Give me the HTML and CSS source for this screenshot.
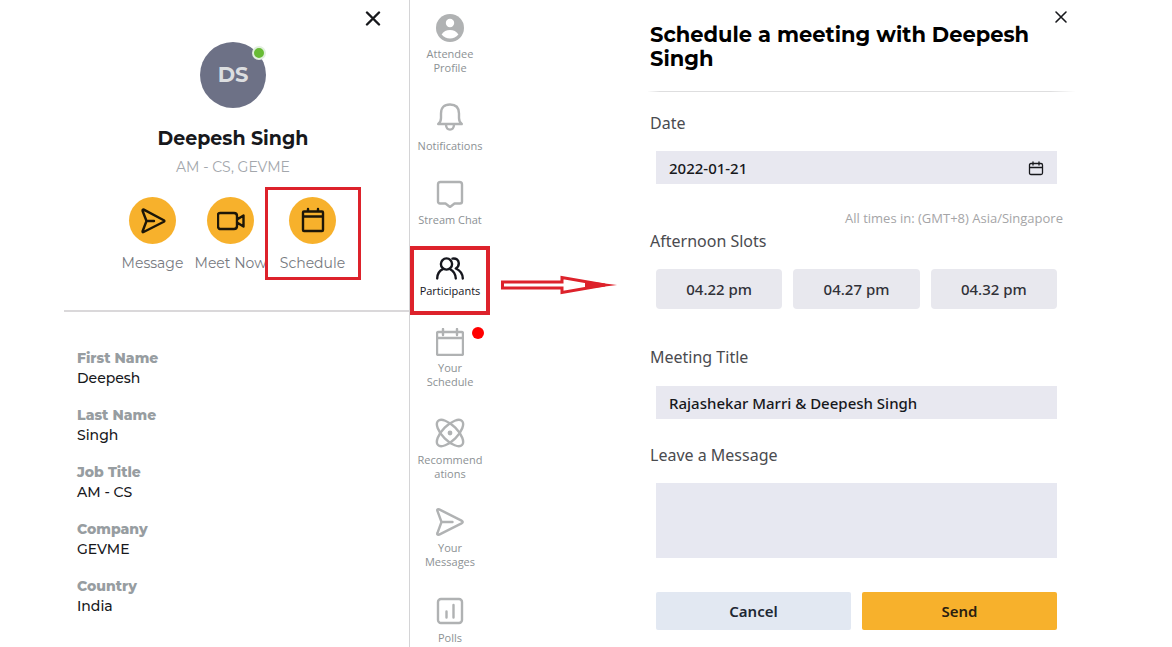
FILE: index.html
```html
<!DOCTYPE html>
<html lang="en">
<head>
<meta charset="utf-8">
<meta name="viewport" content="width=device-width, initial-scale=1">
<title>Schedule a meeting</title>
<link rel="stylesheet" href="styles.css">
</head>
<body>
<div class="app">
  <section class="profile" aria-label="Participant profile">
    <button class="close profile-close" type="button" aria-label="Close profile">
      <svg width="16" height="16" viewBox="0 0 16 16"><path d="M2 2.500l12 12M14 2.500L2 14.500" stroke-width="2.400"/></svg>
    </button>
    <div class="summary">
      <div class="avatar">DS<span class="presence"></span></div>
      <h2 class="name">Deepesh Singh</h2>
      <p class="role">AM - CS, GEVME</p>
      <div class="actions">
        <button class="action" type="button">
          <span class="disc"><svg width="28" height="28" viewBox="0 0 28 28"><path d="M4 2.6Q3.2 3 3.6 4L7.5 14 3.6 24.2Q3.2 25.600 4.600 25L24.800 14.800Q26 14 24.800 13.200L4.800 2.600Q4.400 2.400 4 2.600ZM7.500 14H15"/></svg></span>
          <span>Message</span>
        </button>
        <button class="action" type="button">
          <span class="disc"><svg width="28" height="28" viewBox="0 0 28 28"><path d="M3 6H17Q20 6 20 9V19Q20 22 17 22H4Q1 22 1 19V8Q1 6 3 6ZM20 12.500L26.500 8.500V19.500L20 15.500"/></svg></span>
          <span>Meet Now</span>
        </button>
        <button class="action action-marked" type="button">
          <span class="disc"><svg width="28" height="28" viewBox="0 0 28 28"><path d="M5 4.500H23Q24 4.500 24 5.500V23Q24 24 23 24H5Q4 24 4 23V5.500Q4 4.500 5 4.500ZM4 9.500H24M9 2V4.500M19 2V4.500"/></svg></span>
          <span>Schedule</span>
        </button>
      </div>
    </div>
    <dl class="details">
      <div><dt>First Name</dt><dd>Deepesh</dd></div>
      <div><dt>Last Name</dt><dd>Singh</dd></div>
      <div><dt>Job Title</dt><dd>AM - CS</dd></div>
      <div><dt>Company</dt><dd>GEVME</dd></div>
      <div><dt>Country</dt><dd>India</dd></div>
    </dl>
  </section>

  <nav class="rail" aria-label="Event">
    <a class="rail-item" href="#profile">
      <svg width="28" height="28" viewBox="0 0 28 28"><circle class="solid" cx="14" cy="14" r="14"/><circle class="cut" cx="14" cy="9" r="4.2"/><path class="cut" d="M5.6 20.4Q8.6 16 14 16T22.4 20.4Q19 24.4 14 24.4T5.6 20.4Z"/></svg>
      <span>Attendee Profile</span>
    </a>
    <a class="rail-item" href="#notifications">
      <svg width="28" height="32" viewBox="0 0 28 32"><path d="M2.2 22Q5 20 5 16V11.500Q5 2.500 14 2.500T23 11.500V16Q23 20 25.800 22H2.200ZM10 23Q10.400 27.600 14 27.600T18 23"/></svg>
      <span>Notifications</span>
    </a>
    <a class="rail-item" href="#chat">
      <svg width="28" height="28" viewBox="0 0 28 28"><path d="M4.500 2H23.500Q26 2 26 4.500V21.500Q26 23.500 24 23.500H18.500L14 27 9.500 23.500H4Q2 23.500 2 21.500V4.500Q2 2 4.500 2Z"/></svg>
      <span>Stream Chat</span>
    </a>
    <a class="rail-item rail-item-marked" href="#participants" aria-current="page">
      <svg width="28" height="24" viewBox="0 0 28 24"><circle cx="10.500" cy="7" r="5.600"/><path d="M1.200 21.500Q1.400 14.800 6.800 12.200M14.200 12.200Q19.400 14.800 19.800 21.500M16.500 1.600Q22.500 1 22.800 6.300 22.800 9.800 19.800 11.500 26.600 14.500 26.800 21.500"/></svg>
      <span>Participants</span>
    </a>
    <a class="rail-item" href="#schedule">
      <svg width="28" height="28" viewBox="0 0 28 28"><path d="M2.500 4H25.500Q27 4 27 5.500V25.500Q27 27 25.500 27H2.500Q1 27 1 25.500V5.500Q1 4 2.500 4ZM1 10H27M7 1V7M21 1V7"/></svg>
      <span>Your Schedule</span>
      <i class="badge"></i>
    </a>
    <a class="rail-item" href="#recommendations">
      <svg width="30" height="32" viewBox="0 0 30 32"><ellipse cx="15" cy="17" rx="17" ry="7.500" transform="rotate(45 15 17)"/><ellipse cx="15" cy="17" rx="17" ry="7.500" transform="rotate(-45 15 17)"/><circle class="solid" cx="15" cy="17" r="2.400"/></svg>
      <span>Recommend<wbr>ations</span>
    </a>
    <a class="rail-item" href="#messages">
      <svg width="28" height="28" viewBox="0 0 28 28"><path d="M1.500 3.200Q.5 .8 3.200 1.400L25.500 12.600Q28 14 25.500 15.400L3.200 26.600Q.5 27.200 1.500 24.800L5.500 14ZM5.500 14H16.500"/></svg>
      <span>Your Messages</span>
    </a>
    <a class="rail-item" href="#polls">
      <svg width="28" height="30" viewBox="0 0 28 30"><rect x="2" y="3" width="24" height="24" rx="3"/><path d="M10.500 15.500V21.500M17.500 9V21.500"/></svg>
      <span>Polls</span>
    </a>
  </nav>

  <main class="stage">
    <svg class="pointer" width="116" height="20" viewBox="0 0 116 20" aria-hidden="true"><path d="M1.500 7H61V2.500L104 10 61 17.500V13H1.500Z"/><path class="tip" d="M84 6L116 10 84 14Z"/></svg>
    <form class="meeting">
      <header class="meeting-head">
        <h1>Schedule a meeting with Deepesh Singh</h1>
        <button class="close" type="button" aria-label="Close form">
          <svg width="16" height="16" viewBox="0 0 16 16"><path d="M3 3l10 10M13 3L3 13" stroke-width="1.600"/></svg>
        </button>
      </header>
      <label class="label label-date" for="date">Date</label>
      <div class="date">
        <input class="control" id="date" type="text" value="2022-01-21">
        <svg width="16" height="16" viewBox="0 0 16 16"><path d="M3 3.500H13Q14.500 3.500 14.500 5V13Q14.500 14.500 13 14.500H3Q1.500 14.500 1.500 13V5Q1.500 3.500 3 3.500ZM1.500 7.500H14.500M5 2V5M11 2V5"/></svg>
      </div>
      <p class="zone">All times in: (GMT+8) Asia/Singapore</p>
      <p class="label label-slots" id="slots">Afternoon Slots</p>
      <div class="slots" role="group" aria-labelledby="slots">
        <button class="slot" type="button">04.22 pm</button>
        <button class="slot" type="button">04.27 pm</button>
        <button class="slot" type="button">04.32 pm</button>
      </div>
      <label class="label label-title" for="title">Meeting Title</label>
      <input class="control title" id="title" type="text" value="Rajashekar Marri &amp; Deepesh Singh">
      <label class="label label-message" for="message">Leave a Message</label>
      <textarea class="control message" id="message"></textarea>
      <div class="buttons">
        <button class="button" type="button">Cancel</button>
        <button class="button send" type="submit">Send</button>
      </div>
    </form>
  </main>
</div>
</body>
</html>
```
FILE: styles.css
```css
* { box-sizing: border-box; }
body, h1, h2, p, dl, dd { margin: 0; }
body { background: #fff; color: #17181c; font-family: "Noto Sans", "Open Sans", sans-serif; }
button, input, textarea { font: inherit; color: inherit; border: 0; margin: 0; padding: 0; }
button { background: none; cursor: pointer; }
svg { display: block; fill: none; stroke: currentColor; stroke-width: 2; stroke-linecap: round; stroke-linejoin: round; }

.app {
  display: grid;
  grid-template-columns: minmax(0, 410fr) 80px minmax(0, 682fr);
  min-height: 100vh;
}

/* Profile */
.profile {
  position: relative;
  padding-left: 64px;
  border-right: 1px solid #d4d4d6;
  font-family: Montserrat, Inter, sans-serif;
}
.close { flex: none; width: 16px; height: 16px; }
.profile-close { position: absolute; top: 10px; right: 28px; }
.summary {
  display: flex;
  flex-direction: column;
  align-items: center;
  padding: 42px 7px 30px 0;
  border-bottom: 2px solid #dad8da;
}
.avatar {
  position: relative;
  width: 66px;
  height: 66px;
  border-radius: 50%;
  background: #6d7186;
  color: #dcdee0;
  font-size: 21px;
  font-weight: 700;
  line-height: 66px;
  text-align: center;
}
.presence {
  position: absolute;
  top: 4px;
  right: 0;
  width: 14px;
  height: 14px;
  border: 2px solid #e2efdf;
  border-radius: 50%;
  background: #68bb35;
}
.name { margin-top: 19px; font-size: 19px; font-weight: 700; line-height: 24px; }
.role { margin-top: 6px; color: #a3a7ac; font-size: 14px; line-height: 20px; }
.actions { display: flex; align-items: flex-start; margin-top: 10px; padding-left: 8px; }
.action {
  display: flex;
  flex-direction: column;
  align-items: center;
  width: 78px;
  padding-top: 10px;
  color: #777a7f;
  font-size: 14px;
  line-height: 20px;
  white-space: nowrap;
}
.action svg { stroke-width: 2.4; }
.action-marked {
  position: relative;
  width: 96px;
  height: 93px;
  margin-left: -5px;
  padding-top: 7px;
  border: 3px solid #dd222b;
  background: #fff;
}
.disc {
  display: grid;
  place-items: center;
  width: 47px;
  height: 47px;
  margin-bottom: 9px;
  border-radius: 50%;
  background: #f7b12c;
  color: #1c1608;
}
.details { display: grid; gap: 17px; padding: 36px 13px 0; font-size: 13px; line-height: 20px; }
.details dt { color: #979da1; font-size: 14px; font-weight: 800; }
.details dd { font-size: 14px; font-weight: 500; }

/* Navigation rail */
.rail { display: flex; flex-direction: column; gap: 27px; padding-top: 14px; font-family: "Open Sans", "Noto Sans", sans-serif; }
.rail-item {
  position: relative;
  display: flex;
  flex-direction: column;
  align-items: center;
  gap: 5px;
  padding: 0 6px;
  color: #8c9194;
  font-size: 11px;
  line-height: 14px;
  text-align: center;
  text-decoration: none;
}
.rail-item svg { color: #b0b2b3; stroke-width: 2.4; }
.rail-item span { max-width: 68px; }
.rail-item .solid { fill: currentColor; stroke: none; }
.rail-item .cut { fill: #fff; stroke: none; }
.rail-item-marked {
  gap: 3px;
  height: 69px;
  margin: -8px 0 -14px;
  padding: 7px 0 0;
  border: 4px solid #dd222b;
  color: #15161d;
}
.rail-item-marked svg { color: #15161d; }
.badge { position: absolute; top: -1px; right: 6px; width: 12px; height: 12px; border-radius: 50%; background: #f00; }

/* Meeting form */
.stage { position: relative; padding: 9px 97px 17px 160px; }
.pointer { position: absolute; top: 275px; left: 11px; color: #dd222b; stroke-width: 3; stroke-linejoin: miter; }
.pointer .tip { fill: currentColor; stroke: none; }
.meeting { display: flex; flex-direction: column; padding: 0 18px 0 0; }
.meeting-head {
  display: flex;
  justify-content: space-between;
  align-items: flex-start;
  margin: 0 -18px 0 -2px;
  padding: 0 6px 20px 2px;
  border-bottom: 1px solid;
  border-image: linear-gradient(90deg, #fff, #dededf 3%, #dededf 94%, #fff) 1;
}
.meeting-head h1 {
  padding-top: 14px;
  font-family: Montserrat, Inter, sans-serif;
  font-size: 21px;
  font-weight: 700;
  line-height: 24px;
  color: #000;
}
.label { color: #4a4b4f; font-size: 16px; line-height: 24px; }
.label-date { margin-top: 19px; }
.label-slots { margin-top: 1px; }
.label-title { margin-top: 36px; }
.label-message { margin-top: 24px; }
.control {
  height: 33px;
  margin: 16px 0 0 6px;
  padding: 0 13px;
  border-radius: 0;
  background: #e8e8f0;
  font-size: 15px;
  font-weight: 500;
}
.title { margin-top: 17px; }
.date { display: grid; align-items: center; }
.date .control { grid-area: 1 / 1; }
.date svg { grid-area: 1 / 1; justify-self: end; margin: 16px 13px 0 0; stroke-width: 1.3; }
.zone {
  margin: 24px -6px 0 0;
  color: #a5a5a7;
  font-family: "Open Sans", "Noto Sans", sans-serif;
  font-size: 13px;
  line-height: 20px;
  text-align: right;
}
.slots { display: grid; grid-template-columns: repeat(3, 1fr); gap: 11px; margin: 16px 0 0 6px; }
.slot { height: 40px; border-radius: 4px; background: #e8e8ee; color: #303138; font-size: 15px; font-weight: 500; }
.message { height: 75px; resize: none; background: #e7e8f1; }
.buttons { display: grid; grid-template-columns: 1fr 1fr; gap: 11px; margin: 34px 0 0 6px; }
.button { height: 38px; border-radius: 2px; background: #e2e8f2; color: #1d2733; font-size: 15px; font-weight: 600; }
.send { background: #f7b12c; color: #2a2010; }
```
